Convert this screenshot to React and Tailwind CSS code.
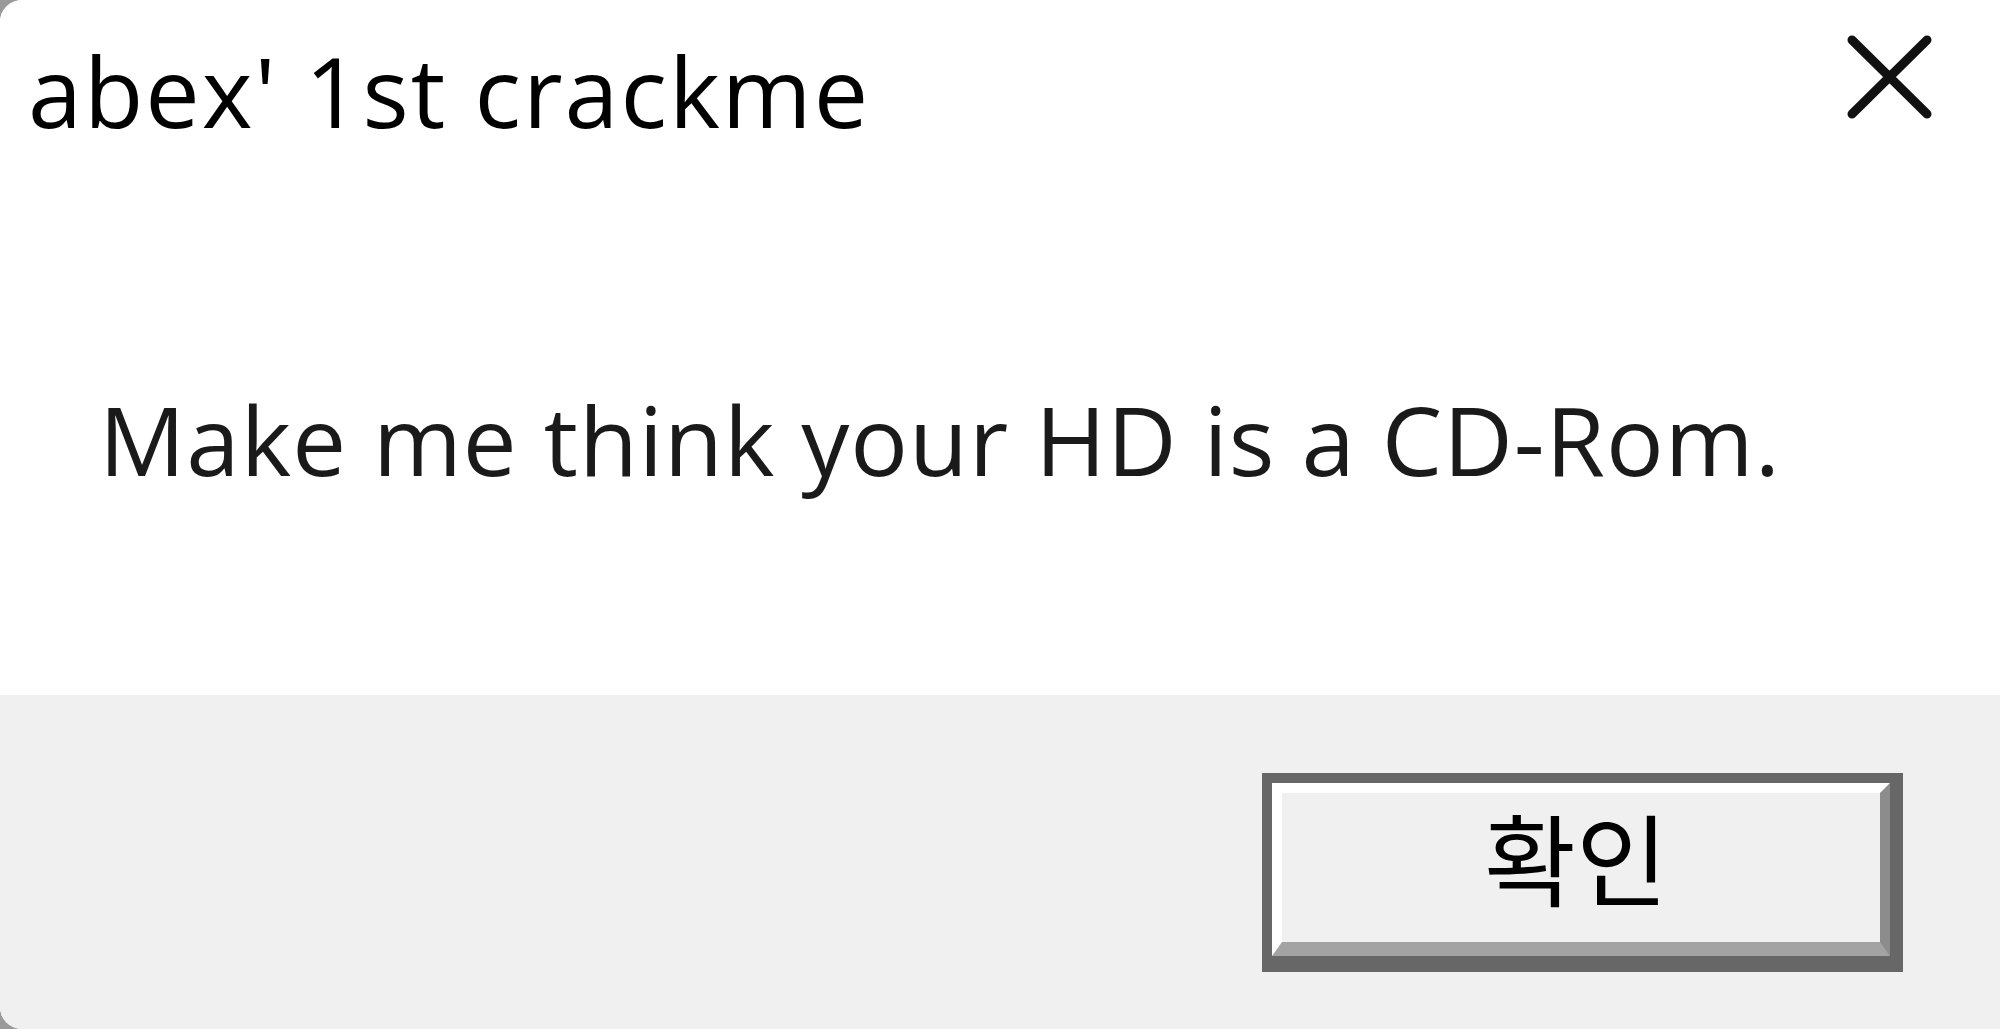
import React from "react";

export default function App() {
  return (
    <div className="w-[2000px] h-[1029px] bg-[#9a9a9a] overflow-hidden">
      <div className="w-full h-full flex flex-col bg-white rounded-tl-[22px] rounded-bl-[22px] overflow-hidden">
        <div className="h-[695px] bg-white flex flex-col">
          <div className="flex flex-row justify-between items-start h-[160px]">
            <div
              className="pl-[28px] pt-[42px] text-[97px] leading-none text-black tracking-[2px]"
              style={{ fontFamily: '"Open Sans", "Noto Sans", sans-serif' }}
            >
              abex' 1st crackme
            </div>
            <div className="pt-[35px] pr-[68px]">
              <svg width="85" height="84" viewBox="0 0 85 84">
                <path d="M5 5 L80 79 M80 5 L5 79" stroke="#111" strokeWidth="9" strokeLinecap="round" fill="none" />
              </svg>
            </div>
          </div>
          <div
            className="pl-[99px] pt-[231px] text-[96px] leading-none text-[#1a1a1a] tracking-[1px]"
            style={{ fontFamily: '"Open Sans", "Noto Sans", sans-serif' }}
          >
            Make me think your HD is a CD-Rom.
          </div>
        </div>
        <div className="flex-1 bg-[#f0f0f0] flex flex-row justify-end items-start pt-[78px] pr-[97px]">
          <div className="w-[641px] h-[199px] border-t-[10px] border-l-[10px] border-r-[13px] border-b-[16px] border-[#676767]">
            <div className="w-full h-full border-t-[10px] border-l-[10px] border-t-white border-l-white border-b-[14px] border-r-[10px] border-b-[#a3a3a3] border-r-[#8c8c8c] bg-[#f0f0f0] flex items-center justify-center">
              <span
                className="text-[100px] leading-none text-black pr-[10px] pb-[24px]"
                style={{ fontFamily: '"Noto Sans CJK KR", "Noto Sans", sans-serif' }}
              >
                확인
              </span>
            </div>
          </div>
        </div>
      </div>
    </div>
  );
}
